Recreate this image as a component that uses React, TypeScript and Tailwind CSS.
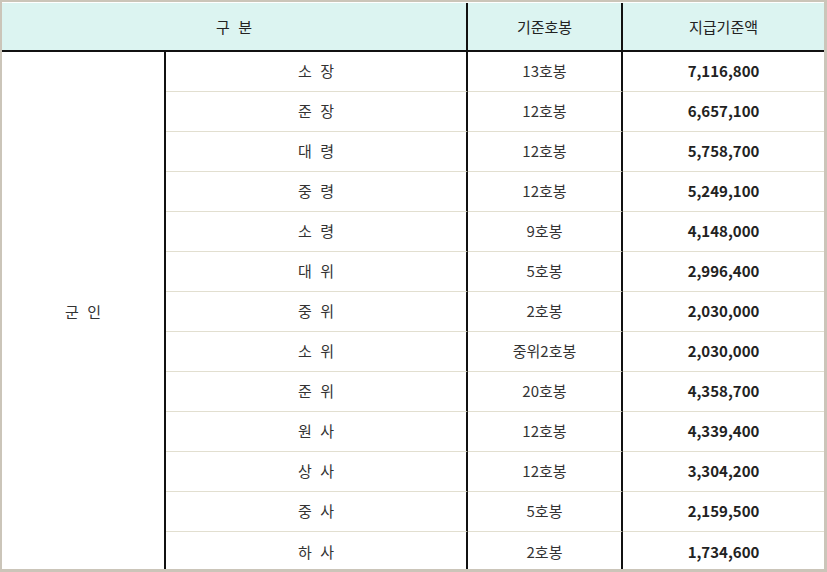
import React from "react";

const rows: [string, string, string][] = [
  ["소 장", "13호봉", "7,116,800"],
  ["준 장", "12호봉", "6,657,100"],
  ["대 령", "12호봉", "5,758,700"],
  ["중 령", "12호봉", "5,249,100"],
  ["소 령", "9호봉", "4,148,000"],
  ["대 위", "5호봉", "2,996,400"],
  ["중 위", "2호봉", "2,030,000"],
  ["소 위", "중위2호봉", "2,030,000"],
  ["준 위", "20호봉", "4,358,700"],
  ["원 사", "12호봉", "4,339,400"],
  ["상 사", "12호봉", "3,304,200"],
  ["중 사", "5호봉", "2,159,500"],
  ["하 사", "2호봉", "1,734,600"],
];

export default function App() {
  return (
    <div
      className="w-[827px] h-[572px] overflow-hidden bg-white border-t-2 border-l-2 border-r-[3px] border-b-[3px] border-[#cbc5b9] text-[15px] text-[#333]"
      style={{ fontFamily: '"Noto Sans CJK KR", "Noto Sans", sans-serif' }}
    >
      <div className="grid grid-cols-[466px_155px_1fr] h-[50px] bg-[#dcf4f1] border-t border-white border-b-2 border-b-[#111] text-[#222]">
        <div className="flex items-center justify-center border-r-2 border-[#111] pt-[1px] [word-spacing:5px]">구 분</div>
        <div className="flex items-center justify-center border-r-2 border-[#111] pt-[1px]">기준호봉</div>
        <div className="flex items-center justify-center pt-[1px]">지급기준액</div>
      </div>
      <div className="grid grid-cols-[164px_302px_155px_1fr]">
        <div className="row-span-13 flex items-center justify-center border-r-2 border-[#111] [word-spacing:5px]">군 인</div>
        {rows.map(([rank, step, amount], i) => (
          <React.Fragment key={i}>
            <div className={`h-[40px] flex items-center justify-center border-r-2 border-r-[#111] [word-spacing:5px] ${i < rows.length - 1 ? "border-b border-b-[#e2dfd0]" : ""}`}>
              {rank}
            </div>
            <div className={`h-[40px] flex items-center justify-center border-r-2 border-r-[#111] ${i < rows.length - 1 ? "border-b border-b-[#e2dfd0]" : ""}`}>
              {step}
            </div>
            <div className={`h-[40px] flex items-center justify-center font-bold text-[#222] ${i < rows.length - 1 ? "border-b border-b-[#e2dfd0]" : ""}`}>
              {amount}
            </div>
          </React.Fragment>
        ))}
      </div>
    </div>
  );
}
